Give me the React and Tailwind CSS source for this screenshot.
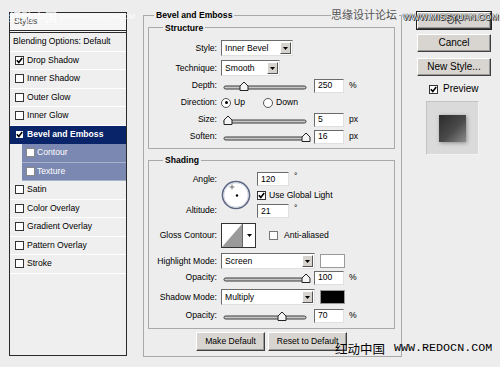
import React from 'react';

const Check = ({ checked, className = 'border-[#333] bg-white' }) => (
  <span className={`inline-flex w-[9px] h-[9px] border items-center justify-center shrink-0 ${className}`}>
    {checked && (
      <svg width="7" height="7" viewBox="0 0 7 7">
        <path d="M0.8 3.2 L2.8 5.4 L6.2 1" stroke="#000" strokeWidth="1.6" fill="none" />
      </svg>
    )}
  </span>
);

const Arrow = () => (
  <svg width="5" height="3" viewBox="0 0 5 3">
    <path d="M0 0 H5 L2.5 3 Z" fill="#000" />
  </svg>
);

const Select = ({ value, w }) => (
  <div className={`flex h-[16px] bg-white border border-t-[#6b6b6b] border-l-[#6b6b6b] border-r-[#e0e0e0] border-b-[#e0e0e0] ${w}`}>
    <span className="flex-1 pl-[3px] flex items-center">{value}</span>
    <span className="w-[11px] my-[1px] mr-[1px] bg-[#d6d3ce] flex items-center justify-center border border-t-white border-l-white border-r-[#555] border-b-[#555]">
      <Arrow />
    </span>
  </div>
);

const NumBox = ({ value, w = 'w-[30px]' }) => (
  <div className={`h-[14px] bg-white border border-t-[#6b6b6b] border-l-[#6b6b6b] border-r-[#e0e0e0] border-b-[#e0e0e0] pl-[3px] flex items-center ${w}`}>
    {value}
  </div>
);

const Slider = ({ pos }) => (
  <svg width="91" height="12" viewBox="0 0 91 12" className="shrink-0">
    <rect x="3" y="6" width="82" height="3" rx="1.5" fill="#c8c8c8" stroke="#3a3a3a" strokeWidth="1" />
    <path d={`M${pos - 4} 10.5 V6 L${pos} 2 L${pos + 4} 6 V10.5 Z`} fill="#f4f4f4" stroke="#222" strokeWidth="1" />
  </svg>
);

const Radio = ({ on }) => (
  <span className="w-[10px] h-[10px] rounded-full border border-[#555] bg-white flex items-center justify-center shrink-0">
    {on && <span className="w-[3px] h-[3px] rounded-full bg-black" />}
  </span>
);

const Row = ({ label, className = '', children }) => (
  <div className={`flex items-center gap-[4px] ${className}`}>
    <span className="w-[68px] text-right shrink-0">{label}</span>
    {children}
  </div>
);

const Btn = ({ children, className = '' }) => (
  <div className={`flex items-center justify-center bg-[#d8d5d0] border border-t-white border-l-white border-r-[#404040] border-b-[#404040] shadow-[inset_-1px_-1px_0_#999] ${className}`}>
    {children}
  </div>
);

const styleItems = [
  { label: 'Drop Shadow', checked: true },
  { label: 'Inner Shadow' },
  { label: 'Outer Glow' },
  { label: 'Inner Glow' },
  { label: 'Bevel and Emboss', checked: true, active: true },
  { label: 'Contour', sub: true },
  { label: 'Texture', sub: true },
  { label: 'Satin' },
  { label: 'Color Overlay' },
  { label: 'Gradient Overlay' },
  { label: 'Pattern Overlay' },
  { label: 'Stroke' },
];

function StylesList() {
  return (
    <div className="w-[118px] h-[344px] border border-[#2a2a2a] bg-[#efefef] flex flex-col">
      <div className="h-[20px] shrink-0 border-b-[3px] border-double border-[#2a2a2a] pl-[4px] flex items-center text-[#444] bg-[#f6f6f6]">
        Styles
      </div>
      <div className="h-[18.5px] shrink-0 border-b border-white pl-[3px] flex items-center">Blending Options: Default</div>
      {styleItems.map((it) => {
        if (it.active) {
          return (
            <div key={it.label} className="h-[18.5px] shrink-0 bg-[#0a246a] text-white font-bold pl-[5px] flex items-center gap-[3px]">
              <Check checked className="border-[#0a246a] bg-white" />
              {it.label}
            </div>
          );
        }
        if (it.sub) {
          return (
            <div key={it.label} className="h-[18.5px] shrink-0 pl-[12px] flex">
              <div className="flex-1 bg-[#7b88b1] border-b border-[#a9b2cd] text-white pl-[4px] flex items-center gap-[2px]">
                <Check className="border-[#888] bg-white" />
                {it.label}
              </div>
            </div>
          );
        }
        return (
          <div key={it.label} className="h-[18.5px] shrink-0 border-b border-white pl-[5px] flex items-center gap-[3px]">
            <Check checked={it.checked} />
            {it.label}
          </div>
        );
      })}
    </div>
  );
}

function BevelPanel() {
  return (
    <fieldset className="border border-[#a9a9a9] h-[346px]">
      <legend className="ml-[10px] px-[2px] font-bold">Bevel and Emboss</legend>
      <div className="pl-[4px] pr-[6px] flex flex-col">
        <fieldset className="border border-[#a9a9a9] mt-[4px]">
          <legend className="ml-[14px] px-[2px] font-bold">Structure</legend>
          <div className="pt-[8px] pb-[3px] flex flex-col">
            <Row label="Style:" className="h-[16px]"><Select value="Inner Bevel" w="w-[72px]" /></Row>
            <Row label="Technique:" className="h-[16px] mt-[4px]"><Select value="Smooth" w="w-[59px]" /></Row>
            <Row label="Depth:" className="h-[17px] mt-[1px]">
              <Slider pos={23} />
              <div className="flex items-center gap-[5px] -ml-[2px]"><NumBox value="250" /><span>%</span></div>
            </Row>
            <Row label="Direction:" className="h-[17px]">
              <Radio on /><span className="ml-[-1px]">Up</span>
              <span className="ml-[14px]"><Radio /></span><span className="ml-[-1px]">Down</span>
            </Row>
            <Row label="Size:" className="h-[17px]">
              <Slider pos={7} />
              <div className="flex items-center gap-[5px] -ml-[2px]"><NumBox value="5" /><span>px</span></div>
            </Row>
            <Row label="Soften:" className="h-[17px]">
              <Slider pos={85} />
              <div className="flex items-center gap-[5px] -ml-[2px]"><NumBox value="16" /><span>px</span></div>
            </Row>
          </div>
        </fieldset>

        <fieldset className="border border-[#a9a9a9] mt-[7px]">
          <legend className="ml-[14px] px-[2px] font-bold">Shading</legend>
          <div className="pt-[7px] pb-[4px] flex flex-col">
            <div className="flex h-[47px]">
              <div className="w-[68px] shrink-0 flex flex-col justify-between text-right">
                <span className="h-[16px] flex items-center justify-end">Angle:</span>
                <span className="h-[16px] flex items-center justify-end">Altitude:</span>
              </div>
              <svg width="30" height="30" viewBox="0 0 30 30" className="ml-[4px] self-center shrink-0">
                <circle cx="15" cy="15" r="13.5" fill="#fff" stroke="#5c6682" strokeWidth="1.6" />
                <circle cx="15" cy="15" r="12.2" fill="none" stroke="#c9cedb" strokeWidth="0.8" />
                <circle cx="16" cy="15.5" r="1.2" fill="#000" />
                <path d="M11 4.5 V9.5 M8.5 7 H13.5" stroke="#555" strokeWidth="0.8" />
              </svg>
              <div className="ml-[6px] flex flex-col gap-[1px]">
                <div className="h-[15px] flex items-center gap-[5px]"><NumBox value="120" w="w-[32px]" /><span className="self-start">°</span></div>
                <div className="h-[15px] flex items-center gap-[3px]"><Check checked />Use Global Light</div>
                <div className="h-[15px] flex items-center gap-[5px]"><NumBox value="21" w="w-[32px]" /><span className="self-start">°</span></div>
              </div>
            </div>
            <Row label="Gloss Contour:" className="h-[25px] mt-[4px]">
              <div className="flex w-[35px] h-[25px] border border-[#333] bg-white">
                <svg width="20" height="23" viewBox="0 0 20 23" className="shrink-0">
                  <path d="M0 23 L20 0 V23 Z" fill="#9a9a9a" />
                </svg>
                <span className="flex-1 border-l border-[#666] flex items-center justify-center"><Arrow /></span>
              </div>
              <span className="ml-[9px] flex items-center gap-[6px]"><Check className="border-[#777] bg-white" />Anti-aliased</span>
            </Row>
            <Row label="Highlight Mode:" className="h-[15px] mt-[6px]">
              <Select value="Screen" w="w-[94px]" />
              <span className="ml-[1px] w-[25px] h-[14px] bg-white border border-[#9a9a9a]" />
            </Row>
            <Row label="Opacity:" className="h-[16px] mt-[1px]">
              <Slider pos={85} />
              <div className="flex items-center gap-[5px] -ml-[2px]"><NumBox value="100" /><span>%</span></div>
            </Row>
            <Row label="Shadow Mode:" className="h-[15px] mt-[4px]">
              <Select value="Multiply" w="w-[94px]" />
              <span className="ml-[1px] w-[25px] h-[14px] bg-black border border-[#9a9a9a]" />
            </Row>
            <Row label="Opacity:" className="h-[16px] mt-[3px]">
              <Slider pos={61} />
              <div className="flex items-center gap-[5px] -ml-[2px]"><NumBox value="70" /><span>%</span></div>
            </Row>
          </div>
        </fieldset>

        <div className="flex justify-center gap-[3px] mt-[3px]">
          <Btn className="w-[69px] h-[19px]">Make Default</Btn>
          <Btn className="w-[79px] h-[19px]">Reset to Default</Btn>
        </div>
      </div>
    </fieldset>
  );
}

export default function App() {
  return (
    <div className="relative w-[500px] h-[367px] overflow-hidden bg-[#ededed] flex font-['Liberation_Sans',Arial,sans-serif] text-[8.6px] text-black leading-none">
      <div className="w-[143px] shrink-0 pl-[9px] pt-[12px]">
        <StylesList />
      </div>

      <div className="w-[259px] shrink-0 pt-[11px]">
        <BevelPanel />
      </div>

      <div className="pl-[15px] pt-[12px] flex flex-col text-[10px]">
        <Btn className="w-[74px] h-[17px] outline outline-1 outline-[#222]"><span className="text-[#444]">OK</span></Btn>
        <Btn className="w-[74px] h-[18px] mt-[5px]">Cancel</Btn>
        <Btn className="w-[74px] h-[18px] mt-[6px]">New Style...</Btn>
        <div className="flex items-center gap-[5px] pl-[12px] mt-[8px]">
          <Check checked />
          <span>Preview</span>
        </div>
        <div className="ml-[9px] mt-[7px] w-[53px] h-[54px] bg-[#dadada] border border-t-[#c4c4c4] border-l-[#c4c4c4] border-r-[#f4f4f4] border-b-[#f4f4f4] flex items-center justify-center">
          <div className="w-[27px] h-[27px] bg-[linear-gradient(135deg,#2c2c2c,#4a4a4a_55%,#8c8c8c)] shadow-[1px_1px_4px_rgba(0,0,0,0.35)]" />
        </div>
      </div>

      {/* watermarks */}
      <div className="absolute left-[9px] top-[11px] text-white/85 text-[12px] font-['Noto_Sans_CJK_SC',sans-serif] whitespace-nowrap flex items-center">
        <span>红动中国</span>
        <span className="ml-[3px] font-['Liberation_Sans',sans-serif] text-[7.5px]">WWW.REDOCN.COM</span>
      </div>
      <div className="absolute left-[331px] top-[9px] text-[#555] text-[11px] font-['Noto_Sans_CJK_SC',sans-serif] bg-[#ededed] pr-[2px] whitespace-nowrap">
        思缘设计论坛
      </div>
      <div className="absolute left-[403px] top-[13px] text-white text-[8.5px] font-['Liberation_Sans',sans-serif] tracking-[0.2px] [text-shadow:0_0_1px_#000,0_0_1px_#000,1px_1px_0_#333] whitespace-nowrap">
        WWW.MISSYUAN.COM
      </div>
      <div className="absolute left-[335px] top-[343px] text-black text-[12.5px] font-['Noto_Sans_CJK_SC',sans-serif] whitespace-nowrap leading-none flex items-center">
        <span>红动中国</span>
        <span className="ml-[9px] font-['Liberation_Mono',monospace] text-[11.7px]">WWW.REDOCN.COM</span>
      </div>
    </div>
  );
}
